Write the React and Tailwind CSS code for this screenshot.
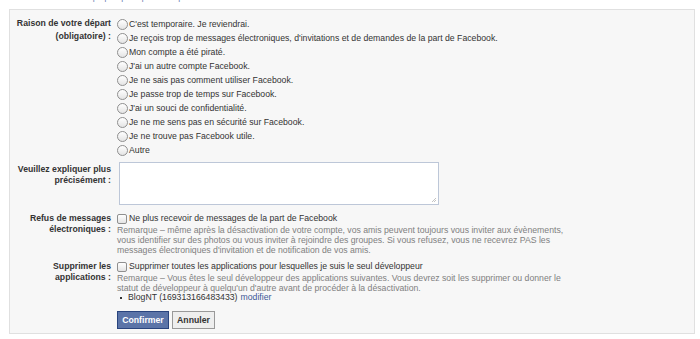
const reasons = [
  "C'est temporaire. Je reviendrai.",
  "Je reçois trop de messages électroniques, d'invitations et de demandes de la part de Facebook.",
  "Mon compte a été piraté.",
  "J'ai un autre compte Facebook.",
  "Je ne sais pas comment utiliser Facebook.",
  "Je passe trop de temps sur Facebook.",
  "J'ai un souci de confidentialité.",
  "Je ne me sens pas en sécurité sur Facebook.",
  "Je ne trouve pas Facebook utile.",
  "Autre",
];

function Radio() {
  return (
    <span className="inline-block w-[11px] h-[11px] mr-[1px] shrink-0 rounded-full border border-[#8f8f8f] bg-gradient-to-b from-white to-[#e4e4e4]" />
  );
}

function Checkbox() {
  return (
    <span className="inline-block w-[10px] h-[10px] mr-[2px] shrink-0 rounded-[2px] border border-[#8f8f8f] bg-gradient-to-b from-white to-[#e4e4e4]" />
  );
}

function Row({ label, children, className = "" }) {
  return (
    <div className={"flex " + className}>
      <div className="w-[101px] shrink-0 text-right font-bold leading-[11px] text-[#333]">
        {label}
      </div>
      <div className="pl-[6px] flex-1">{children}</div>
    </div>
  );
}

export default function App() {
  return (
    <div
      className="w-[700px] h-[339px] bg-white overflow-hidden text-[8.7px] text-[#333]"
      style={{ fontFamily: '"Liberation Sans", Arial, sans-serif' }}
    >
      <div className="h-[9px] overflow-hidden pl-[30px]">
        <div className="-mt-[8px] leading-[11px] text-[#6d84b4]">
          Veuillez nous expliquer pourquoi vous partez
        </div>
      </div>

      <div className="ml-[9px] w-[686px] border border-[#e0e0e0] bg-[#f7f7f7] pt-[7px] pb-[4px]">
        <div className="flex">
          <div className="w-[101px] shrink-0 text-right font-bold leading-[13px]">
            Raison de votre départ
            <br />
            (obligatoire) :
          </div>
          <div className="pl-[6px] flex flex-col">
            {reasons.map((r) => (
              <div key={r} className="flex items-center h-[14px] leading-[14px]">
                <Radio />
                <span>{r}</span>
              </div>
            ))}
          </div>
        </div>

        <Row
          className="mt-[5px]"
          label={
            <div className="pt-[2px]">
              Veuillez expliquer plus
              <br />
              précisément :
            </div>
          }
        >
          <div className="ml-[2px] w-[320px] h-[43px] border border-[#bdc7d8] bg-white relative">
            <svg className="absolute right-[1px] bottom-[1px]" width="6" height="6" viewBox="0 0 6 6">
              <path d="M5 1 L1 5 M5 3 L3 5" stroke="#b5b5b5" strokeWidth="0.8" />
            </svg>
          </div>
        </Row>

        <Row
          className="mt-[8px]"
          label={
            <>
              Refus de messages
              <br />
              électroniques :
            </>
          }
        >
          <div className="flex items-center h-[12px]">
            <Checkbox />
            <span>Ne plus recevoir de messages de la part de Facebook</span>
          </div>
          <div className="text-[#808080] leading-[10px] whitespace-nowrap">
            Remarque – même après la désactivation de votre compte, vos amis peuvent toujours vous inviter aux évènements,
            <br />
            vous identifier sur des photos ou vous inviter à rejoindre des groupes. Si vous refusez, vous ne recevrez PAS les
            <br />
            messages électroniques d'invitation et de notification de vos amis.
          </div>
        </Row>

        <Row
          className="mt-[6px]"
          label={
            <>
              Supprimer les
              <br />
              applications :
            </>
          }
        >
          <div className="flex items-center h-[12px]">
            <Checkbox />
            <span>Supprimer toutes les applications pour lesquelles je suis le seul développeur</span>
          </div>
          <div className="text-[#808080] leading-[10px] whitespace-nowrap">
            Remarque – Vous êtes le seul développeur des applications suivantes. Vous devrez soit les supprimer ou donner le
            <br />
            statut de développeur à quelqu'un d'autre avant de procéder à la désactivation.
          </div>
          <div className="flex items-center h-[10px] pl-[3px]">
            <span className="inline-block w-[2px] h-[2px] bg-[#333] mr-[6px]" />
            <span>BlogNT (169313166483433)</span>
            <span className="ml-[3px] text-[#3b5998]">modifier</span>
          </div>
          <div className="flex gap-[3px] mt-[8px]">
            <button className="h-[18px] w-[52px] border border-[#29447e] bg-[#5b74a8] text-white font-bold leading-[16px]">
              Confirmer
            </button>
            <button className="h-[18px] w-[43px] border border-[#999] bg-[#eeeeee] text-[#333] font-bold leading-[16px]">
              Annuler
            </button>
          </div>
        </Row>
      </div>
    </div>
  );
}
